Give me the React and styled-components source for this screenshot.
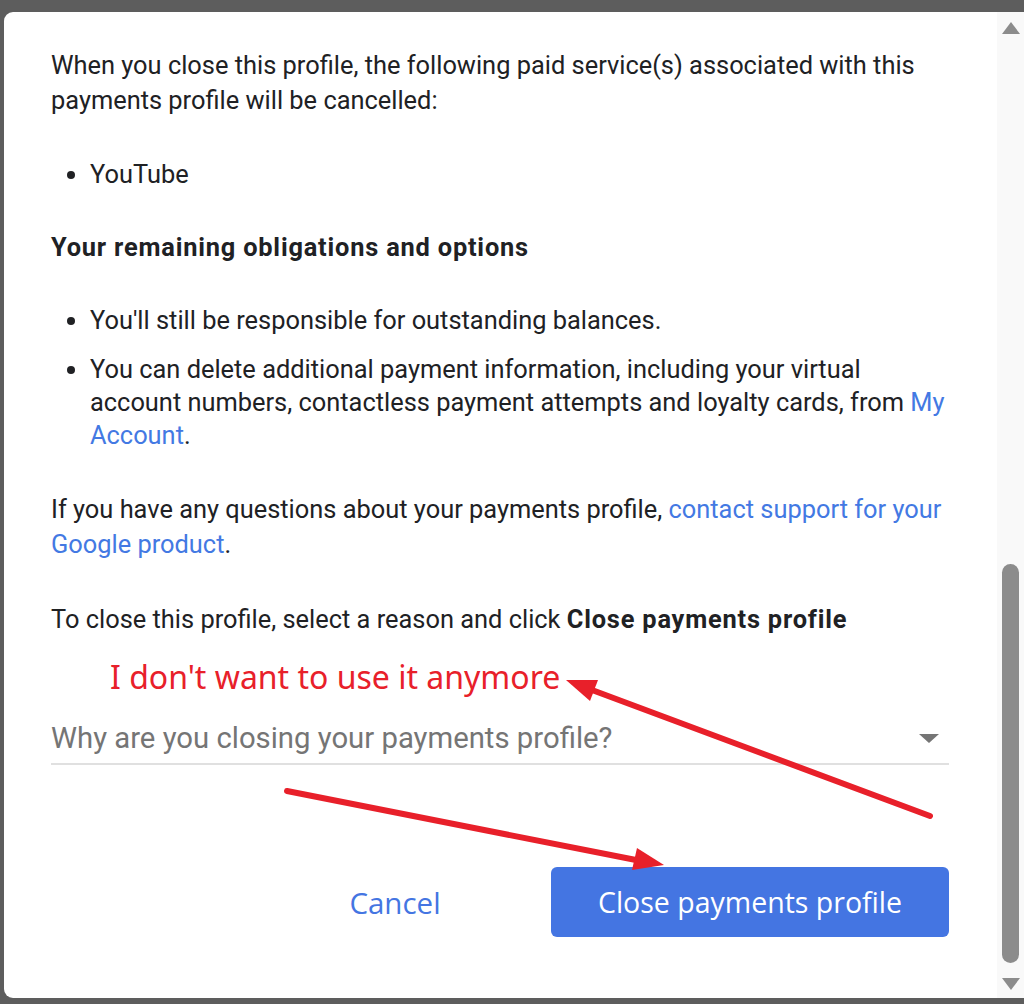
import React from 'react'
import styled, { createGlobalStyle } from 'styled-components'

const Global = createGlobalStyle`
  html, body {
    margin: 0;
    padding: 0;
    background: #5d5d5d;
  }
  body {
    font-family: Roboto, "Liberation Sans", sans-serif;
  }
`

const Page = styled.div`
  position: relative;
  width: 1024px;
  height: 1004px;
  padding: 12px 0 6px 4px;
  box-sizing: border-box;
  overflow: hidden;
`

const Dialog = styled.div`
  display: flex;
  height: 986px;
  background: #fff;
  border-radius: 9px 0 0 9px;
  overflow: hidden;
`

const Content = styled.div`
  flex: 1;
  padding: 36px 48px 0 47px;
  color: #202124;
  font-size: 25.4px;
  line-height: 35px;

  b {
    letter-spacing: 0.8px;
  }
`

const Para = styled.p`
  margin: 0 0 40px;
`

const Heading = styled.p`
  margin: 0 0 40px;
  font-weight: 700;
  line-height: 33px;
  letter-spacing: 0.8px;
`

const List = styled.ul`
  margin: 0 0 40px;
  padding-left: 39px;
  line-height: 33px;
`

const Item = styled.li`
  & + & {
    margin-top: 16px;
  }
`

const Link = styled.a`
  color: #4379e3;
  text-decoration: none;
`

const Select = styled.div`
  display: flex;
  align-items: center;
  justify-content: space-between;
  margin-top: 84px;
  padding-bottom: 8px;
  border-bottom: 2px solid #e0e0e0;
  color: #757575;
  font-size: 29.3px;
  line-height: 34px;
`

const Caret = styled.span`
  width: 0;
  height: 0;
  margin-right: 10px;
  border-left: 10px solid transparent;
  border-right: 10px solid transparent;
  border-top: 9px solid #757575;
`

const Actions = styled.div`
  display: flex;
  justify-content: flex-end;
  align-items: center;
  gap: 66px;
  margin-top: 102px;
`

const Button = styled.button`
  height: 70px;
  padding: 0;
  border: none;
  border-radius: 6px;
  font-family: "Open Sans", Roboto, sans-serif;
  font-weight: 500;
  font-size: ${(p) => (p.primary ? '28.5px' : '29.5px')};
  cursor: pointer;
  background: ${(p) => (p.primary ? '#4475e2' : 'transparent')};
  color: ${(p) => (p.primary ? '#fff' : '#4475e2')};
  width: ${(p) => (p.primary ? '398px' : '180px')};
`

const Scrollbar = styled.div`
  display: flex;
  flex-direction: column;
  align-items: center;
  width: 27px;
  background: #f9f9f9;
  padding: 10px 0 8px;
  box-sizing: border-box;
`

const Arrow = styled.span`
  width: 0;
  height: 0;
  border-left: 9px solid transparent;
  border-right: 9px solid transparent;
  ${(p) => (p.down ? 'border-top: 12px solid #8c8c8c;' : 'border-bottom: 12px solid #8c8c8c;')}
`

const Thumb = styled.div`
  width: 17px;
  height: 399px;
  margin: auto 0 15px;
  border-radius: 9px;
  background: #8c8c8c;
`

const Note = styled.div`
  position: absolute;
  left: 110px;
  top: 654px;
  color: #e8202a;
  font-family: "Noto Sans", "Open Sans", sans-serif;
  font-size: 32px;
  line-height: 46px;
  white-space: nowrap;
`

const Marks = styled.svg`
  position: absolute;
  left: 0;
  top: 0;
  pointer-events: none;
`

export default function App() {
  return (
    <Page>
      <Global />
      <Dialog>
        <Content>
          <Para>
            When you close this profile, the following paid service(s) associated with this
            payments profile will be cancelled:
          </Para>
          <List>
            <Item>YouTube</Item>
          </List>
          <Heading>Your remaining obligations and options</Heading>
          <List>
            <Item>You'll still be responsible for outstanding balances.</Item>
            <Item>
              You can delete additional payment information, including your virtual account
              numbers, contactless payment attempts and loyalty cards, from <Link>My Account</Link>.
            </Item>
          </List>
          <Para>
            If you have any questions about your payments profile,{' '}
            <Link>contact support for your Google product</Link>.
          </Para>
          <Para>
            To close this profile, select a reason and click <b>Close payments profile</b>
          </Para>
          <Select>
            <span>Why are you closing your payments profile?</span>
            <Caret />
          </Select>
          <Actions>
            <Button>Cancel</Button>
            <Button primary>Close payments profile</Button>
          </Actions>
        </Content>
        <Scrollbar>
          <Arrow />
          <Thumb />
          <Arrow down />
        </Scrollbar>
      </Dialog>
      <Note>I don't want to use it anymore</Note>
      <Marks width="1024" height="1004" viewBox="0 0 1024 1004">
        <g stroke="#e8202a" strokeWidth="6" strokeLinecap="round" fill="#e8202a">
          <line x1="930" y1="816" x2="592" y2="690" />
          <line x1="287" y1="791" x2="636" y2="860" />
          <polygon points="566,680 598,680 590,701" stroke="none" />
          <polygon points="664,865 637,848 632,870" stroke="none" />
        </g>
      </Marks>
    </Page>
  )
}
